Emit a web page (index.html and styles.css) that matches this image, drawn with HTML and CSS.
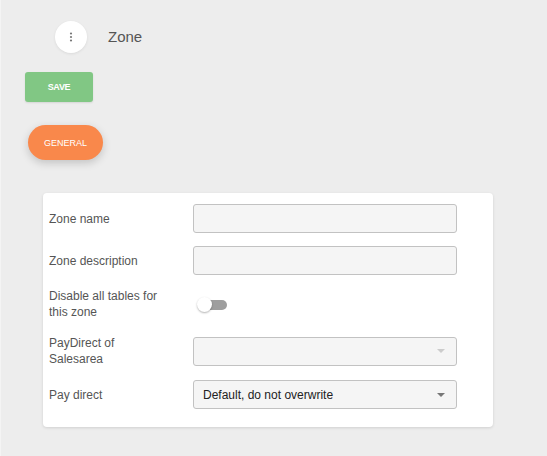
FILE: index.html
```html
<!DOCTYPE html>
<html>
<head>
<meta charset="utf-8">
<link rel="stylesheet" href="styles.css">
</head>
<body>
<div class="page">
  <header class="header">
    <button class="menu-btn" type="button">
      <svg width="4" height="10" viewBox="0 0 4 10"><circle cx="2" cy="1.5" r="1.1" fill="#777"/><circle cx="2" cy="5" r="1.1" fill="#777"/><circle cx="2" cy="8.5" r="1.1" fill="#777"/></svg>
    </button>
    <h1 class="title">Zone</h1>
  </header>
  <button class="save-btn" type="button">SAVE</button>
  <button class="tab-btn" type="button">GENERAL</button>
  <section class="card">
    <div class="row">
      <label class="label">Zone name</label>
      <input class="field" type="text">
    </div>
    <div class="row">
      <label class="label">Zone description</label>
      <input class="field" type="text">
    </div>
    <div class="row">
      <label class="label">Disable all tables for this zone</label>
      <div class="toggle"><span class="track"></span><span class="knob"></span></div>
    </div>
    <div class="row row-pay">
      <label class="label">PayDirect of Salesarea</label>
      <div class="field select disabled"><span class="value"></span><span class="caret"></span></div>
    </div>
    <div class="row">
      <label class="label">Pay direct</label>
      <div class="field select"><span class="value">Default, do not overwrite</span><span class="caret"></span></div>
    </div>
  </section>
</div>
</body>
</html>
```

FILE: styles.css
```css
* { box-sizing: border-box; }
html, body { margin: 0; padding: 0; }
body {
  background: #ededed;
  font-family: "Liberation Sans", Arial, sans-serif;
  width: 547px;
  height: 456px;
  overflow: hidden;
}
.page {
  border-left: 1px solid #f4f4f4;
  height: 456px;
  display: flex;
  flex-direction: column;
  align-items: flex-start;
}
.header {
  display: flex;
  align-items: center;
  margin: 21px 0 0 54px;
  gap: 21px;
}
.menu-btn {
  width: 32px;
  height: 32px;
  border-radius: 50%;
  border: none;
  background: #fff;
  box-shadow: 0 1px 3px rgba(0,0,0,0.08);
  display: flex;
  align-items: center;
  justify-content: center;
  padding: 0;
}
.title {
  margin: 0 0 2px 0;
  font-size: 15px;
  font-weight: normal;
  color: #555;
}
.save-btn {
  margin: 19px 0 0 24px;
  width: 68px;
  height: 30px;
  border: none;
  border-radius: 3px;
  background: #81c784;
  color: #fff;
  font-family: "Liberation Sans", Arial, sans-serif;
  font-size: 9px;
  font-weight: bold;
  letter-spacing: -0.3px;
  box-shadow: 0 1px 2px rgba(0,0,0,0.1);
  padding: 0;
}
.tab-btn {
  margin: 23px 0 0 27px;
  width: 75px;
  height: 35px;
  border: none;
  border-radius: 18px;
  background: #f9884b;
  color: #fff;
  font-family: "Liberation Sans", Arial, sans-serif;
  font-size: 9px;
  box-shadow: 0 3px 8px rgba(0,0,0,0.18);
  padding: 0;
}
.card {
  margin: 33px 0 0 42px;
  width: 450px;
  background: #fff;
  border-radius: 4px;
  box-shadow: 0 1px 3px rgba(0,0,0,0.12);
  padding: 11px 36px 18px 6px;
  display: flex;
  flex-direction: column;
  gap: 13px;
}
.row {
  display: grid;
  grid-template-columns: 110px 264px;
  column-gap: 34px;
  align-items: center;
  min-height: 29px;
}
.row-pay { margin-top: 2px; }
.label {
  font-size: 12px;
  line-height: 16px;
  color: #555;
}
.field {
  width: 264px;
  height: 29px;
  background: #f5f5f5;
  border: 1px solid #c2c2c2;
  border-radius: 3px;
  font-family: "Liberation Sans", Arial, sans-serif;
  font-size: 12px;
  margin: 0;
}
.select {
  display: flex;
  align-items: center;
  justify-content: space-between;
  padding: 0 11px 0 9px;
  color: #222;
}
.caret {
  width: 0;
  height: 0;
  border-left: 4px solid transparent;
  border-right: 4px solid transparent;
  border-top: 4px solid #777;
}
.disabled .caret { border-top-color: #ccc; }
.toggle {
  position: relative;
  width: 31px;
  height: 15px;
  margin-left: 4px;
}
.track {
  position: absolute;
  left: 4px;
  top: 3px;
  width: 26px;
  height: 10px;
  border-radius: 5px;
  background: #9e9e9e;
}
.knob {
  position: absolute;
  left: 0;
  top: 0;
  width: 15px;
  height: 15px;
  border-radius: 50%;
  background: #fff;
  box-shadow: 0 1px 2px rgba(0,0,0,0.3);
}
```
